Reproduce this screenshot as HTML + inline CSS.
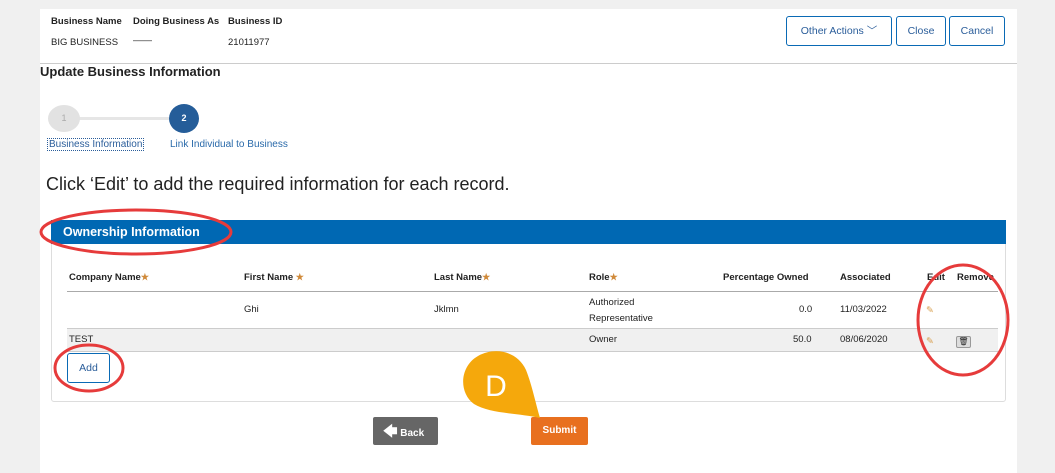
<!DOCTYPE html>
<html><head><style>
*{margin:0;padding:0;box-sizing:border-box}
body{width:1055px;height:473px;background:#f0f0f0;font-family:"Liberation Sans",sans-serif;position:relative;overflow:hidden;color:#222}
.a{position:absolute;white-space:nowrap}
.panel{position:absolute;left:40px;top:9px;width:977px;height:464px;background:#fff}
.b{font-weight:bold}
.s{font-size:9.5px}
.btn{position:absolute;border:1px solid #0a6ab5;border-radius:3px;color:#2a5d9a;font-size:10.5px;text-align:center;background:#fff}
.star{color:#d08a3a;font-size:9px}
</style></head><body>
<div class="panel"></div>
<div class="a b s" style="left:51px;top:16px">Business Name</div>
<div class="a b s" style="left:133px;top:16px">Doing Business As</div>
<div class="a b s" style="left:228px;top:16px">Business ID</div>
<div class="a s" style="left:51px;top:37px">BIG BUSINESS</div>
<div class="a s" style="left:133px;top:35px">——</div>
<div class="a s" style="left:228px;top:37px">21011977</div>
<div class="btn" style="left:786px;top:16px;width:106px;height:30px;line-height:28px">Other Actions ﹀</div>
<div class="btn" style="left:896px;top:16px;width:50px;height:30px;line-height:28px">Close</div>
<div class="btn" style="left:949px;top:16px;width:56px;height:30px;line-height:28px">Cancel</div>
<div class="a" style="left:40px;top:63px;width:977px;height:1px;background:#ccc"></div>
<div class="a b" style="left:40px;top:64px;font-size:13px">Update Business Information</div>
<div class="a" style="left:64px;top:117px;width:120px;height:3px;background:#e6e6e6"></div>
<div class="a" style="left:48px;top:105px;width:32px;height:27px;border-radius:50%;background:#e2e2e2;color:#aaa;font-size:9px;text-align:center;line-height:27px">1</div>
<div class="a" style="left:169px;top:104px;width:30px;height:29px;border-radius:50%;background:#255d99;color:#fff;font-size:9px;font-weight:bold;text-align:center;line-height:29px">2</div>
<div class="a" style="left:47px;top:138px;font-size:10px;color:#2a5d9a;border:1px dotted #2a5d9a;padding:0 1px">Business Information</div>
<div class="a" style="left:170px;top:139px;font-size:10px;color:#2a6aaa">Link Individual to Business</div>
<div class="a" style="left:46px;top:174px;font-size:18px;color:#222">Click ‘Edit’ to add the required information for each record.</div>
<div class="a" style="left:51px;top:220px;width:955px;height:182px;border:1px solid #ddd;border-radius:3px"></div>
<div class="a" style="left:51px;top:220px;width:955px;height:24px;background:#0068b3"></div>
<div class="a b" style="left:63px;top:225px;color:#fff;font-size:12.5px">Ownership Information</div>
<div class="a b s" style="left:69px;top:272px">Company Name<span class="star">★</span></div>
<div class="a b s" style="left:244px;top:272px">First Name <span class="star">★</span></div>
<div class="a b s" style="left:434px;top:272px">Last Name<span class="star">★</span></div>
<div class="a b s" style="left:589px;top:272px">Role<span class="star">★</span></div>
<div class="a b s" style="left:723px;top:272px">Percentage Owned</div>
<div class="a b s" style="left:840px;top:272px">Associated</div>
<div class="a b s" style="left:927px;top:272px">Edit</div>
<div class="a b s" style="left:957px;top:272px">Remove</div>
<div class="a" style="left:67px;top:291px;width:931px;height:1px;background:#aaa"></div>
<div class="a" style="left:67px;top:328px;width:931px;height:24px;background:#f0f0f0;border-top:1px solid #ccc;border-bottom:1px solid #ccc"></div>
<div class="a s" style="left:244px;top:304px">Ghi</div>
<div class="a s" style="left:434px;top:304px">Jklmn</div>
<div class="a s" style="left:589px;top:295px;line-height:16px">Authorized<br>Representative</div>
<div class="a s" style="left:799px;top:304px">0.0</div>
<div class="a s" style="left:840px;top:304px">11/03/2022</div>
<div class="a s" style="left:926px;top:305px;color:#d9a050">✎</div>
<div class="a s" style="left:69px;top:334px">TEST</div>
<div class="a s" style="left:589px;top:334px">Owner</div>
<div class="a s" style="left:793px;top:334px">50.0</div>
<div class="a s" style="left:840px;top:334px">08/06/2020</div>
<div class="a s" style="left:926px;top:336px;color:#d9a050">✎</div>
<div class="a" style="left:956px;top:336px;width:15px;height:12px;background:#ddd;border:1px solid #999;border-radius:2px;font-size:8px;text-align:center;line-height:10px">🗑</div>
<div class="btn" style="left:67px;top:353px;width:43px;height:30px;line-height:28px">Add</div>
<div class="a" style="left:373px;top:417px;width:65px;height:28px;background:#666;border-radius:2px;color:#fff;font-size:10px;font-weight:bold;line-height:28px;padding-left:10px"><span style="font-size:14px">🡄</span> Back</div>
<div class="a" style="left:531px;top:417px;width:57px;height:28px;background:#e8701f;border-radius:2px;color:#fff;font-size:10px;font-weight:bold;line-height:28px;text-align:center">Submit</div>
<svg class="a" style="left:0;top:0" width="1055" height="473">
<ellipse cx="136" cy="232" rx="95" ry="22" fill="none" stroke="#e63b3b" stroke-width="3"/>
<ellipse cx="89" cy="368" rx="34" ry="23" fill="none" stroke="#e63b3b" stroke-width="3"/>
<ellipse cx="963" cy="320" rx="45" ry="55" fill="none" stroke="#e63b3b" stroke-width="3"/>
<path d="M540 418 C520 413 490 414 474 404 C458 392 460 366 478 356 C496 346 518 352 526 370 C532 385 536 405 540 418Z" fill="#f5a80c"/>
<text x="496" y="396" font-family="Liberation Sans" font-size="30" fill="#fff" text-anchor="middle">D</text>
</svg>
</body></html>
